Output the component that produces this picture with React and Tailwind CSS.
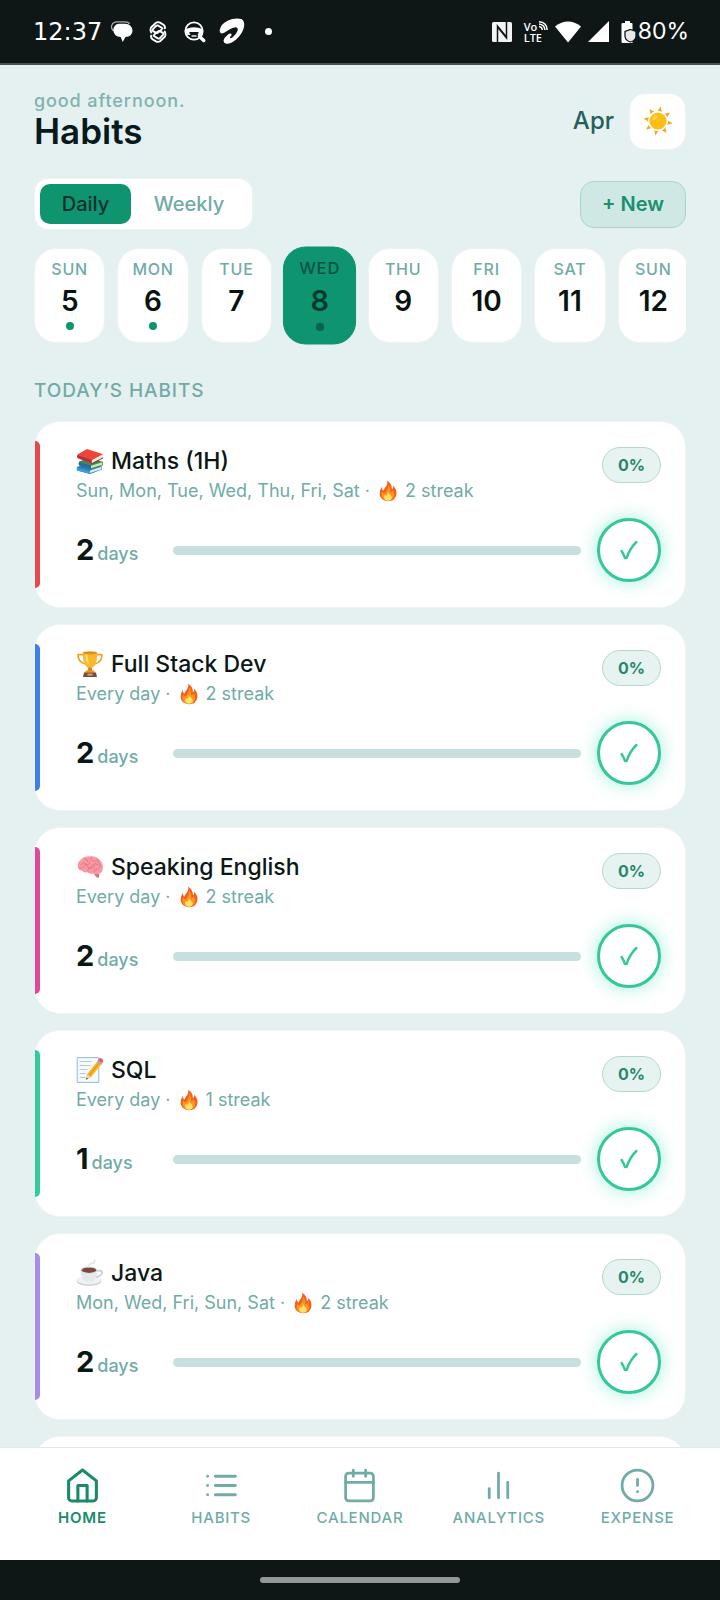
import { useState } from 'react';
import { FiHome, FiList, FiCalendar, FiBarChart2, FiAlertCircle } from 'react-icons/fi';

const DAYS = [
  { name: 'Sun', date: 5, done: true },
  { name: 'Mon', date: 6, done: true },
  { name: 'Tue', date: 7 },
  { name: 'Wed', date: 8, done: true },
  { name: 'Thu', date: 9 },
  { name: 'Fri', date: 10 },
  { name: 'Sat', date: 11 },
  { name: 'Sun', date: 12 },
];

const HABITS = [
  { title: 'Maths (1H)', icon: BooksIcon, schedule: 'Sun, Mon, Tue, Wed, Thu, Fri, Sat', streak: 2, stripe: 'bg-[#e5484d]' },
  { title: 'Full Stack Dev', icon: TrophyIcon, schedule: 'Every day', streak: 2, stripe: 'bg-[#3f7fe8]' },
  { title: 'Speaking English', icon: BrainIcon, schedule: 'Every day', streak: 2, stripe: 'bg-[#e0489a]' },
  { title: 'SQL', icon: MemoIcon, schedule: 'Every day', streak: 1, stripe: 'bg-[#34cb9c]' },
  { title: 'Java', icon: CoffeeIcon, schedule: 'Mon, Wed, Fri, Sun, Sat', streak: 2, stripe: 'bg-[#a78bf0]' },
];

const TABS = [
  { label: 'Home', icon: FiHome },
  { label: 'Habits', icon: FiList },
  { label: 'Calendar', icon: FiCalendar },
  { label: 'Analytics', icon: FiBarChart2 },
  { label: 'Expense', icon: FiAlertCircle },
];

function SunIcon() {
  const rays = [10, 55, 100, 145, 190, 235, 280, 325];
  return (
    <svg viewBox="0 0 32 32" className="size-8" aria-hidden="true">
      {rays.map((deg) => (
        <path key={deg} d="M13.8 6.4 16 1.2l2.2 5.2Q16 5.4 13.8 6.4Z" fill="#f6a32c" transform={`rotate(${deg} 16 16)`} />
      ))}
      <circle cx="16" cy="16" r="8.6" fill="#fcbe15" />
      <ellipse cx="13" cy="12.6" rx="2.8" ry="1.8" fill="#fdd95a" transform="rotate(-35 13 12.6)" />
    </svg>
  );
}

function BooksIcon() {
  return (
    <svg viewBox="0 0 28 28" className="size-7" aria-hidden="true">
      <path d="M1 20 12 16l14 3.5v3L14 27 1 23.5Z" fill="#2b7bb5" />
      <path d="M14 23.5 25.5 19.8v2.4L14 26Z" fill="#dcecf5" />
      <path d="M1 20.4 14 24v2.8L1 23.6Q.2 21.8 1 20.4Z" fill="#3a9bd9" />
      <path d="M3 14.5 14 11l13 3.8v3.4L15.5 22 3 18.2Z" fill="#3f8a5c" />
      <path d="M15 18.7 26.3 15.2v2.6L15 21.3Z" fill="#cfe7a8" />
      <path d="M3 15 15 18.4v3.4L3 18.3Q2 16.5 3 15Z" fill="#256b9b" />
      <path d="M1.5 7.4 11 2l16.2 5.2L15.6 13.8Z" fill="#f0433a" />
      <path d="M15.6 13.2 26.8 7.4v3L15.6 16.4Z" fill="#f3e6e2" />
      <path d="M1.5 7.4 15.6 13v3.6L1.6 11.2Q.4 9.2 1.5 7.4Z" fill="#b92f34" />
      <path d="M15.6 16.4 27.2 10.2v1L15.6 17.4Z" fill="#8e2530" />
    </svg>
  );
}

function TrophyIcon() {
  return (
    <svg viewBox="0 0 28 28" className="size-7" aria-hidden="true">
      <path d="M8 4.6H2.2Q1.6 11.5 9 14M20 4.6h5.8Q26.4 11.5 19 14" fill="none" stroke="#f0a01e" strokeWidth="1.7" />
      <path d="M12.4 16h3.2l.7 6h-4.6Z" fill="#d8831a" />
      <path d="M6.8 2.4h14.4Q21.4 14.6 16.4 17.4h-4.8Q6.6 14.6 6.8 2.4Z" fill="#fbb929" />
      <path d="M9.4 4.6h2.4q0 7 1.8 10.8Q9.6 13 9.4 4.6Z" fill="#fde07a" />
      <ellipse cx="14" cy="2.8" rx="7.3" ry="1.6" fill="#e08f17" />
      <path d="M10 20.6h8l1 2.2H9Z" fill="#e9971c" />
      <path d="M8 22.4h12l1 4.6H7Z" fill="#7b4b3d" />
      <path d="M11.4 23.6h5.2v2h-5.2Z" fill="#d8a35d" />
    </svg>
  );
}

function BrainIcon() {
  return (
    <svg viewBox="0 0 28 28" className="size-7" aria-hidden="true">
      <path d="M17 18q5 1 6.5 2.4L22.6 25q-2.8-.4-4.6-4Z" fill="#d96f7e" />
      <path d="M2 15Q.6 9.6 5 6.6 9 2.6 14.4 3.4 20 2.8 23.4 6.8 27.4 10 26.8 15q.2 4.6-3.6 5.6-3 1.4-6-.4-3 1.4-5.6-1Q8 20.2 6 17.8 3 17.6 2 15Z" fill="#f898a3" />
      <path d="M5 12q3-4 5-1t4-2M9 6q3 0 3 3m3-5q-1 3 2 4t4-1M4 15q3 1 4-2t4 1 4-2M12 18q-1-3 3-3t3-3 4 0M18 19q0-3 3-3t3-4M22 7q-1 3 2 4" fill="none" stroke="#e07482" strokeWidth="0.9" strokeLinecap="round" />
    </svg>
  );
}

function MemoIcon() {
  return (
    <svg viewBox="0 0 28 28" className="size-7" aria-hidden="true">
      <path d="M1.2 1.6h21.6v24.8H1.2Z" fill="#f7fafc" stroke="#8fbcdc" strokeWidth="1" />
      <path d="M3.6 5.5h12M3.6 9.5h11M3.6 13.5h8M3.6 17.5h6M3.6 21.5h6" stroke="#b9cbd8" strokeWidth="1" />
      <path d="M11 18.2 22 4.4l4.2 3.2L15 21.2l-4.8 2.6Z" fill="#fbb829" />
      <path d="M13 19.6 24 6" stroke="#e89412" strokeWidth="1.2" />
      <path d="m11 18.2 4 3-4.8 2.6Z" fill="#f3d3a6" />
      <path d="m10.6 21.6 1.4 1.1-1.8 1.1Z" fill="#444" />
      <path d="m20.8 5.9 1.4-1.8 4.2 3.2-1.4 1.8Z" fill="#9bb4c2" />
      <path d="m22 4.2 1-1.4q1.2-1.4 3 0t1 3.2l-.8 1.2Z" fill="#ef5a5f" />
    </svg>
  );
}

function CoffeeIcon() {
  return (
    <svg viewBox="0 0 28 28" className="size-7" aria-hidden="true">
      <ellipse cx="13" cy="22" rx="12.4" ry="4.8" fill="#c4ced2" />
      <ellipse cx="13" cy="21.2" rx="12" ry="4.2" fill="#eef2f3" />
      <path d="M21 11.8q5.4-1 5 2.2t-6.6 4" fill="none" stroke="#c7d0d4" strokeWidth="1.8" />
      <path d="M4.6 11q0 8.6 5 11.4h6.8q5-2.8 5-11.4Z" fill="#e4eaec" />
      <ellipse cx="13" cy="11" rx="8.4" ry="3.6" fill="#d5dcdf" />
      <ellipse cx="13" cy="11.2" rx="7.2" ry="2.7" fill="#7a4b3a" />
      <path d="M13 8q-1-2.4 2.6-3.4T18.4 1" fill="none" stroke="#dfe5e7" strokeWidth="1.6" strokeLinecap="round" />
    </svg>
  );
}

function FireIcon() {
  return (
    <svg viewBox="0 0 20 22" className="h-[22px] w-5 shrink-0" aria-hidden="true">
      <path d="M9 .8q5 2.6 5 8.4 1.6-1 1.2-3.4Q19 9.6 18.4 14.4 17.2 21 10 21.2 2.6 21 1.6 14.6 1.4 9.8 4 6.8q-.4 2.8 1.2 4Q6.600 8 8.400 5.800T9 .8Z" fill="#f4611f" />
      <path d="M10 4.500q2.800 3.500 2.200 8 1.800-.4 2.400-2.300 2.600 3.800.9 7.200-1.900 3.400-5.500 3.400-4.600-.2-6.200-3.800-.8-2.700.5-5.400.5 1.600 2 2Q10.500 10 10 4.500Z" fill="#fc9620" />
      <path d="M9.800 11.200q.4 2.200 2 3.200t2 3q-.5 3.200-3.800 3.300-3.400-.1-3.900-3.200 0-1.600.9-2.500.5.900 1.300.8Q10.500 14 9.800 11.200Z" fill="#fee264" />
    </svg>
  );
}

function CheckIcon() {
  return (
    <svg viewBox="0 0 20 22" className="h-[22px] w-5" fill="none" stroke="#34c79c" strokeWidth="2.4" strokeLinecap="round" strokeLinejoin="round" aria-hidden="true">
      <path d="M2.600 12q2 3 3.400 7h1.600Q11 9 17.400 3" />
    </svg>
  );
}

function StatusBar() {
  return (
    <div className="flex h-[65px] shrink-0 items-center justify-between border-b-2 border-[#485250] bg-[#0f1616] pr-[31px] pl-[33px] text-white">
      <div className="flex items-center">
        <span className="w-[78px] font-['DejaVu_Sans',sans-serif] text-[24px]">12:37</span>
        <svg viewBox="0 0 22 22" className="size-[22px]" aria-hidden="true">
          <path d="M2.500 10Q-.5 7 .9 4 2 .9 6 .9h8q3.500 0 4.500 2" fill="none" stroke="#a9adad" strokeWidth="1.300" />
          <path d="M8 2.800h6q7 .3 7.500 7-.3 5.800-7 6.200l-2.800 5-2-5Q3 15.500 2.300 9.500 2.500 3.200 8 2.800Z" fill="#fff" />
        </svg>
        {/* two interlocked links */}
        <svg viewBox="0 0 18 22" className="ml-[16px] h-[22px] w-[18px]" fill="none" stroke="#fff" strokeWidth="1.900" strokeLinejoin="round" strokeLinecap="round" aria-hidden="true">
          <path d="M13.500 7.200 9.200 4.600Q8 4 7 5L4 8.200q-1 1.200.2 2l3 1.700q1 .5 1.900-.3l3.600-3" />
          <path d="M2.300 11.500Q1 9 2 6.500L7 1.800Q9 .6 11 1.600l3.500 2.200q1.800 1.400 1.400 3.600" />
          <path d="M4.500 14.800 8.800 17.400q1.200.6 2.200-.4l3-3.200q1-1.200-.2-2l-3-1.700q-1-.5-1.900.3l-3.600 3" />
          <path d="M15.700 10.500Q17 13 16 15.500l-5 4.700q-2 1.200-4 .2l-3.500-2.200Q1.700 16.800 2.100 14.600" />
        </svg>
        <svg viewBox="0 0 22 22" className="ml-[17px] size-[22px]" aria-hidden="true">
          <circle cx="10" cy="10" r="8.700" fill="none" stroke="#fff" strokeWidth="1.800" />
          <path d="M1.500 8Q10 4.500 18.500 8v3.500Q18 14 16 14H14l-1-3H7l-1 3H3.500Q1.500 12 1.500 8Z" fill="#fff" />
          <path d="M5.500 11.800h1.700M12.800 11.800h1.700" stroke="#0f1616" strokeWidth="1.800" />
          <path d="m15.500 15.500 4.200 4" stroke="#fff" strokeWidth="3.400" strokeLinecap="round" />
          <path d="M7.500 15h5" stroke="#fff" strokeWidth="1.400" />
        </svg>
        <svg viewBox="0 0 26 27" className="ml-[13px] h-[27px] w-[26px]" aria-hidden="true">
          <path d="M.6 12.500Q1.500 6.200 8.500 2.800T22.400 1q3.600 2.200 2.600 8-1.500 6.800-7.600 12.300-5.800 4.900-10.200 4.500-2.800-.6-2.600-3.200.6-3.200 4.400-6.200 2-1.400 3.200-.6 1 .9-.4 2.400-1.600 1.700-.4 2 1.700.2 4-2.600 3.400-4.200 3.400-6.400-.2-2.400-3.400-1.800-3.600.8-7.400 3.700-3.200 2.600-5.400 2.400-2-.6-2-3Z" fill="#fff" />
        </svg>
        <span className="ml-[20px] size-[7px] rounded-full bg-white" />
      </div>
      <div className="flex items-center">
        <svg viewBox="0 0 20 20" className="size-5" aria-hidden="true">
          <path d="M1.500 0h17Q20 0 20 1.500v17q0 1.500-1.500 1.500h-17Q0 20 0 18.500v-17Q0 0 1.500 0Z" fill="#f2f4f4" />
          <path d="M5.500 20V4L14 14.500M14.500 0v16L6 5.500" fill="none" stroke="#0f1616" strokeWidth="1.500" />
        </svg>
        <div className="ml-[12px] grid w-6 grid-cols-[auto_10px] font-['Open_Sans',sans-serif] text-[11px] leading-[11px] font-semibold">
          <span>Vo</span>
          <svg viewBox="0 0 10 10" className="size-[10px]" fill="none" stroke="#fff" strokeWidth="1.500" aria-hidden="true">
            <path d="M1 5.500q3 .3 3.400 3.500M1 3q5.500.5 6 6M1 .8q7.700.3 8.200 8.200" />
          </svg>
          <span className="col-span-2">LTE</span>
        </div>
        <svg viewBox="0 0 26 22" className="ml-[7px] h-[22px] w-[26px]" aria-hidden="true">
          <path d="M0 5.500Q13-4.500 26 5.500L13 21.500Z" fill="#fff" />
        </svg>
        <svg viewBox="0 0 21 21" className="ml-[7px] size-[21px]" aria-hidden="true">
          <path d="M21 0v21H0Z" fill="#fff" />
        </svg>
        <svg viewBox="0 0 16 22" className="ml-[12px] h-[22px] w-4" aria-hidden="true">
          <path d="M3 2h1V0h5v2h1.500q1 0 1 1v19h-10Q.5 22 .5 21V3q0-1 1-1Z" fill="#fff" />
          <path d="m9.500 8.500 5.500 2v5q-.5 4-5.500 5.500Q4.500 19.500 4 15.500v-5Z" fill="#e8eaea" stroke="#0f1616" strokeWidth="1.300" />
        </svg>
        <span className="ml-px text-[23px]">80%</span>
      </div>
    </div>
  );
}

function DayPill({ day, active, onSelect }) {
  return (
    <button
      onClick={onSelect}
      className={`flex h-[95px] flex-col items-center rounded-[22px] border pt-[10px] ${
        active ? 'scale-[1.03] border-[#0f9470] bg-[#0f9470]' : 'border-[#edf3f3] bg-white'
      }`}
    >
      <span className={`text-[16px] leading-5 font-medium tracking-wider uppercase ${active ? 'text-[#0a5145]' : 'text-[#70aba7]'}`}>{day.name}</span>
      <span className={`mt-[6px] text-[28px] leading-8 font-semibold ${active ? 'text-[#07382f]' : 'text-[#07130f]'}`}>{day.date}</span>
      {day.done && <span className={`mt-[5px] size-2 rounded-full ${active ? 'bg-[#0a6350]' : 'bg-[#0f9470]'}`} />}
    </button>
  );
}

function HabitCard({ habit }) {
  const Icon = habit.icon;
  return (
    <article className="relative h-[187px] shrink-0 rounded-[26px] border border-[#eff5f5] bg-white pt-[25px] pr-6 pl-[41px]">
      <span className={`absolute inset-y-[19px] left-0 w-[5px] rounded-r-[5px] ${habit.stripe}`} />
      <div className="flex items-start justify-between">
        <div>
          <h3 className="flex items-center gap-[7px] text-[23px] leading-7 font-medium text-[#0b1716]">
            <Icon />
            {habit.title}
          </h3>
          <p className="mt-1 flex items-center text-[18px] leading-6 text-[#70aba7]">
            {habit.schedule} ·
            <span className="ml-2 flex items-center gap-[7px]">
              <FireIcon />
              {habit.streak} streak
            </span>
          </p>
        </div>
        <span className="flex h-9 w-[59px] items-center justify-center rounded-full border border-[#b4d8d1] bg-[#e6f3f1] text-[16px] font-bold text-[#26876c]">
          0%
        </span>
      </div>
      <div className="mt-[15px] flex items-center">
        <div className="flex w-[97px] items-baseline gap-[3px]">
          <span className="text-[29px] leading-10 font-bold text-[#0b1716]">{habit.streak}</span>
          <span className="text-[18px] font-medium text-[#70aba7]">days</span>
        </div>
        <div className="h-[9px] flex-1 rounded-full bg-[#c8dfdf]" />
        <button
          aria-label={`Mark ${habit.title} done`}
          className="ml-4 flex size-16 items-center justify-center rounded-full border-3 border-[#34c79c] bg-white shadow-[0_0_18px_rgba(45,225,175,0.45)]"
        >
          <CheckIcon />
        </button>
      </div>
    </article>
  );
}

export default function App() {
  const [view, setView] = useState('Daily');
  const [selected, setSelected] = useState(3);
  const [tab, setTab] = useState('Home');

  return (
    <div className="flex h-screen flex-col bg-[#e5f1f1] font-[Inter,sans-serif]">
      <StatusBar />

      <main className="flex min-h-0 flex-1 flex-col overflow-y-auto px-[34px] [scrollbar-width:none]">
        <header className="mt-[26px] flex items-center justify-between">
          <div>
            <p className="text-[18px] leading-5 font-medium tracking-wider text-[#7fb3b0]">good afternoon.</p>
            <h1 className="text-[35px] leading-10 font-semibold text-[#07191a]">Habits</h1>
          </div>
          <div className="flex items-center gap-[15px]">
            <span className="text-[24px] font-medium text-[#23605b]">Apr</span>
            <button aria-label="Toggle theme" className="flex size-[57px] items-center justify-center rounded-[16px] border border-[#edf3f3] bg-white">
              <SunIcon />
            </button>
          </div>
        </header>

        <div className="mt-[27px] flex items-center justify-between">
          <div className="flex rounded-[14px] border border-[#edf3f3] bg-white p-[5px]">
            {['Daily', 'Weekly'].map((v) => (
              <button
                key={v}
                onClick={() => setView(v)}
                className={`h-10 rounded-[10px] text-[20px] font-medium ${v === 'Daily' ? 'w-[91px]' : 'w-[116px]'} ${
                  view === v ? 'bg-[#0f9470] text-[#07302a]' : 'text-[#70aba7]'
                }`}
              >
                {v}
              </button>
            ))}
          </div>
          <button className="h-[47px] w-[106px] rounded-[14px] border border-[#a9d5cd] bg-[#cfe8e4] text-[20px] font-semibold text-[#1a9070]">
            + New
          </button>
        </div>

        {/* Week strip, last day runs slightly past the edge */}
        <div className="mt-[16px] shrink-0 overflow-hidden py-[2px]">
          <div className="-mr-[3px] grid grid-cols-8 gap-3">
            {DAYS.map((day, i) => (
              <DayPill key={day.date} day={day} active={i === selected} onSelect={() => setSelected(i)} />
            ))}
          </div>
        </div>

        <h2 className="mt-[34px] text-[19px] leading-6 font-medium tracking-wider text-[#70aba7] uppercase">Today’s Habits</h2>

        <section className="mt-[18px] flex flex-col gap-4">
          {HABITS.map((habit) => (
            <HabitCard key={habit.title} habit={habit} />
          ))}
          {/* blank card that closes the list */}
          <div className="h-[187px] shrink-0 rounded-[26px] border border-[#eff5f5] bg-white" />
        </section>
      </main>

      <nav className="grid h-[113px] shrink-0 grid-cols-5 border-t border-[#e3e9e9] bg-white px-[13px]">
        {TABS.map(({ label, icon: Icon }) => (
          <button
            key={label}
            onClick={() => setTab(label)}
            className={`flex flex-col items-center pt-[19px] ${tab === label ? 'text-[#1a8a6b]' : 'text-[#70aba7]'}`}
          >
            <Icon size={37} strokeWidth={tab === label ? 2 : 1.8} />
            <span className={`mt-[4px] text-[15px] leading-5 tracking-wider uppercase ${tab === label ? 'font-semibold' : 'font-medium'}`}>{label}</span>
          </button>
        ))}
      </nav>

      <div className="flex h-10 shrink-0 items-center justify-center bg-[#0f1616]">
        <span className="h-[6px] w-[200px] rounded-full bg-[#929897]" />
      </div>
    </div>
  );
}
